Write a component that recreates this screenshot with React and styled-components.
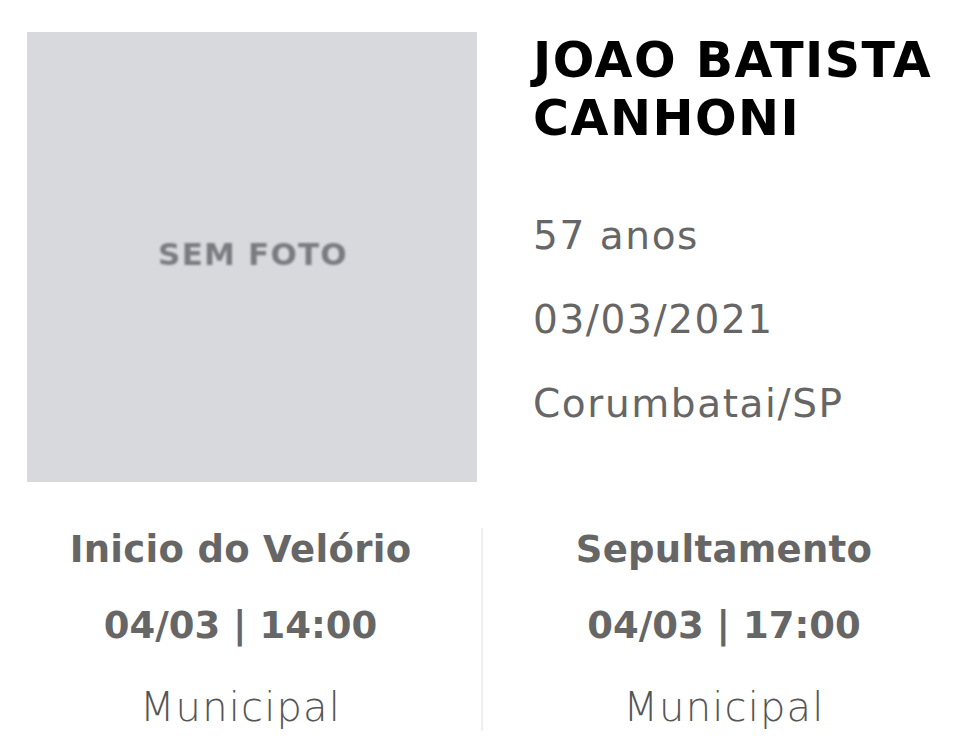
import React from "react";
import styled, { createGlobalStyle } from "styled-components";

const Global = createGlobalStyle`
  html, body { margin: 0; padding: 0; background: #fff; }
  body { font-family: "DejaVu Sans", "Open Sans", sans-serif; }
`;

const Page = styled.div`
  width: 970px;
  padding: 32px 0 0 0;
  box-sizing: border-box;
`;

const Top = styled.div`
  display: flex;
  align-items: flex-start;
  padding-left: 27px;
  gap: 56px;
`;

const Photo = styled.div`
  width: 450px;
  height: 450px;
  flex: none;
  background: #d8d9dd;
  display: flex;
  align-items: center;
  justify-content: center;
`;

const PhotoLabel = styled.span`
  font-family: "DejaVu Sans", sans-serif;
  font-weight: 700;
  font-size: 31px;
  letter-spacing: 1.2px;
  color: #7a7b80;
  filter: blur(0.9px);
  margin-bottom: 6px;
  margin-left: 2px;
`;

const Info = styled.div`
  display: flex;
  flex-direction: column;
`;

const Name = styled.h1`
  margin: 0;
  font-family: "DejaVu Sans", sans-serif;
  font-weight: 700;
  font-size: 49px;
  letter-spacing: 1.5px;
  line-height: 58px;
  color: #000;
  margin-bottom: 46px;
`;

const Detail = styled.div`
  font-size: 39px;
  letter-spacing: 1.6px;
  line-height: 84px;
  color: #666;
`;

const Bottom = styled.div`
  display: grid;
  grid-template-columns: 481px 2px 482px;
  margin-top: 46px;
`;

const Divider = styled.div`
  background: #eee;
  height: 203px;
`;

const Event = styled.div`
  display: flex;
  flex-direction: column;
  align-items: center;
  color: #666;
`;

const EventTitle = styled.div`
  font-weight: 700;
  font-size: 37px;
  letter-spacing: 0.3px;
  line-height: 44px;
`;

const EventTime = styled.div`
  font-weight: 700;
  font-size: 37px;
  line-height: 44px;
  margin-top: 32px;
`;

const EventPlace = styled.div`
  font-weight: 200;
  font-size: 40px;
  letter-spacing: 1.2px;
  line-height: 44px;
  margin-top: 37px;
  color: #555;
`;

export default function App() {
  return (
    <Page>
      <Global />
      <Top>
        <Photo>
          <PhotoLabel>SEM FOTO</PhotoLabel>
        </Photo>
        <Info>
          <Name>
            JOAO BATISTA
            <br />
            CANHONI
          </Name>
          <Detail>57 anos</Detail>
          <Detail>03/03/2021</Detail>
          <Detail>Corumbatai/SP</Detail>
        </Info>
      </Top>
      <Bottom>
        <Event>
          <EventTitle>Inicio do Velório</EventTitle>
          <EventTime>04/03 | 14:00</EventTime>
          <EventPlace>Municipal</EventPlace>
        </Event>
        <Divider />
        <Event>
          <EventTitle>Sepultamento</EventTitle>
          <EventTime>04/03 | 17:00</EventTime>
          <EventPlace>Municipal</EventPlace>
        </Event>
      </Bottom>
    </Page>
  );
}
